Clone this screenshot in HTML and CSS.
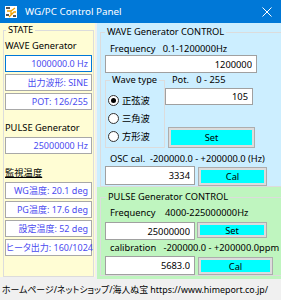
FILE: index.html
```html
<!DOCTYPE html>
<html lang="ja">
<head>
    <meta charset="UTF-8">
    <meta name="viewport" content="width=device-width, initial-scale=1.0">
    <title>WG/PC Control Panel</title>
    <link rel="stylesheet" href="styles.css">
</head>
<body>

<div class="window">
    <div class="titlebar">
        <svg class="app-icon" width="12" height="12" viewBox="0 0 12 12">
            <rect width="12" height="12" fill="#fff"/>
            <rect x="1" y="1" width="4" height="2" fill="#555"/>
            <rect x="1" y="8" width="3" height="2" fill="#555"/>
            <rect x="8" y="9" width="3" height="2" fill="#555"/>
            <path d="M2 5 L6 5 L6 9 M6 5 L10 2 M4 11 L9 6 L11 6" stroke="#f0a000" stroke-width="1.3" fill="none"/>
        </svg>
        <span class="title">WG/PC Control Panel</span>
        <svg class="close" width="10" height="10" viewBox="0 0 10 10">
            <path d="M0.5 0.5 L9.5 9.5 M9.5 0.5 L0.5 9.5" stroke="#fff" stroke-width="1"/>
        </svg>
    </div>

    <div class="main">
        <div class="state-pane">
            <fieldset class="group state">
                <legend>STATE</legend>
                <div class="caption">WAVE Generator</div>
                <div class="value active">1000000.0 Hz</div>
                <div class="value">出力波形: SINE</div>
                <div class="value">POT: 126/255</div>

                <div class="caption pulse-caption">PULSE Generator</div>
                <div class="value">25000000 Hz</div>

                <div class="caption temp-caption">監視温度</div>
                <div class="value">WG温度: 20.1 deg</div>
                <div class="value">PG温度: 17.6 deg</div>
                <div class="value">設定温度: 52 deg</div>
                <div class="value">ヒータ出力: 160/1024</div>
            </fieldset>
        </div>

        <div class="control-col">
            <div class="wave-pane">
                <fieldset class="group">
                    <legend>WAVE Generator CONTROL</legend>
                    <div class="label freq-label">Frequency&nbsp;&nbsp; 0.1-1200000Hz</div>
                    <input class="field freq-field" type="text" value="1200000">

                    <div class="wave-row">
                        <fieldset class="group wave-type">
                            <legend>Wave type</legend>
                            <label class="radio first"><span class="dot checked"></span>正弦波</label>
                            <label class="radio"><span class="dot"></span>三角波</label>
                            <label class="radio"><span class="dot"></span>方形波</label>
                        </fieldset>
                        <div class="pot">
                            <div class="label pot-label">Pot.&nbsp;&nbsp; 0 - 255</div>
                            <input class="field pot-field" type="text" value="105">
                            <button class="btn pot-set" type="button">Set</button>
                        </div>
                    </div>

                    <div class="label osc-label">OSC cal.&nbsp; -200000.0 - +200000.0 (Hz)</div>
                    <div class="row osc-row">
                        <input class="field short" type="text" value="3334">
                        <button class="btn osc-cal" type="button">Cal</button>
                    </div>
                </fieldset>
            </div>

            <div class="pulse-pane">
                <fieldset class="group">
                    <legend>PULSE Generator CONTROL</legend>
                    <div class="label pfreq-label">Frequency&nbsp;&nbsp;&nbsp; 4000-225000000Hz</div>
                    <div class="row pfreq-row">
                        <input class="field short" type="text" value="25000000">
                        <button class="btn pulse-set" type="button">Set</button>
                    </div>
                    <div class="label pcal-label">calibration&nbsp;&nbsp; -200000.0 - +200000.0ppm</div>
                    <div class="row pcal-row">
                        <input class="field short tall" type="text" value="5683.0">
                        <button class="btn pulse-cal" type="button">Cal</button>
                    </div>
                </fieldset>
            </div>
        </div>
    </div>

    <div class="footer">ホームページ/ネットショップ/海人ぬ宝 https://www.himeport.co.jp/</div>
</div>

</body>
</html>
```

FILE: styles.css
```css
* {
    box-sizing: border-box;
}
body {
    margin: 0;
    font-family: "Noto Sans", "Noto Sans CJK JP", sans-serif;
    font-size: 9.3px;
    font-feature-settings: "palt";
    color: #000;
    background-color: #f0f0f0;
}
.window {
    width: 281px;
    height: 300px;
    overflow: hidden;
}
.titlebar {
    height: 23px;
    background-color: #0078d7;
    color: white;
    display: flex;
    align-items: center;
    padding-left: 5px;
}
.app-icon {
    flex: none;
}
.title {
    margin-left: 8px;
    font-size: 9.8px;
    flex: 1;
}
.close {
    margin-right: 9px;
}
.main {
    display: flex;
    gap: 2px;
    height: 256px;
}

/* fieldset used as a groupbox */
.group {
    margin: 0;
    border: 1px solid #dcdcdc;
    min-width: 0;
}
.group legend {
    padding: 0 2px;
    line-height: 12px;
}

/* left: STATE */
.state-pane {
    width: 95px;
    margin-bottom: 2px;
    background-color: #fffdd4;
    padding: 1px 1px 0 3px;
}
.state {
    height: 100%;
    padding: 0 1px;
}
.state legend {
    margin-left: 1px;
}
.caption {
    line-height: 14px;
    margin-top: 3px;
    margin-bottom: 2px;
}
.pulse-caption {
    margin-top: 11px;
}
.temp-caption {
    margin-top: 12px;
    text-decoration: underline;
}
.value {
    height: 17px;
    line-height: 15px;
    margin-bottom: 2px;
    border: 1px solid #a8a8a8;
    background: white;
    color: #4b4bf0;
    font-size: 9px;
    text-align: right;
    padding-right: 3px;
    white-space: nowrap;
}
.value.active {
    border-color: #0078d7;
}

/* right column */
.control-col {
    flex: 1;
    display: flex;
    flex-direction: column;
}
.wave-pane {
    height: 164px;
    overflow: hidden;
    background-color: #cceeff;
    padding: 3px 0 0 3px;
}
.wave-pane > .group,
.pulse-pane > .group {
    padding: 0 0 0 4px;
    margin-right: -1px;
}
.pulse-pane {
    flex: 1;
    background-color: #bff5bf;
    padding: 4px 0 0 3px;
}
.pulse-pane legend {
    margin-left: 1px;
}
.label {
    line-height: 12px;
    padding-left: 5px;
    white-space: nowrap;
}
.freq-label {
    margin-top: 5px;
}
.field {
    display: block;
    margin: 0;
    height: 18px;
    border: 1px solid #a0a0a0;
    background: white;
    font: inherit;
    text-align: right;
    padding: 0 4px 0 0;
    color: #000;
}
.freq-field {
    width: 152px;
}
.wave-row {
    display: flex;
    margin-top: 1px;
}
.wave-type {
    width: 60px;
    padding: 0 0 2px 2px;
}
.wave-type legend {
    margin-left: 2px;
}
.radio {
    display: flex;
    align-items: center;
    height: 18px;
}
.radio.first {
    margin-top: 5px;
}
.dot {
    width: 11px;
    height: 11px;
    border: 1px solid #333;
    border-radius: 50%;
    background: white;
    margin-right: 3px;
    position: relative;
}
.dot.checked::after {
    content: "";
    position: absolute;
    left: 2px;
    top: 2px;
    width: 5px;
    height: 5px;
    border-radius: 50%;
    background: #000;
}
.pot {
    display: flex;
    flex-direction: column;
}
.pot-label {
    padding-left: 7px;
}
.pot-field {
    width: 88px;
    height: 17px;
    margin-top: 2px;
}
.btn {
    display: block;
    margin: 0;
    padding: 0;
    font: inherit;
    background-color: #00ffff;
    border: 1px solid #adadad;
    box-shadow: inset 0 0 0 2px #dcdcdc;
    color: #000;
}
.pot-set {
    width: 87px;
    height: 21px;
    margin: 22px 0 0 3px;
}
.osc-label {
    margin-top: 5px;
}
.row {
    display: flex;
    align-items: flex-start;
}
.osc-row {
    margin-top: 1px;
    gap: 3px;
}
.short {
    width: 90px;
    height: 19px;
}
.osc-cal {
    width: 69px;
    height: 19px;
    margin-top: 1px;
}
.pfreq-label {
    margin-top: 4px;
}
.pfreq-row {
    margin-top: 3px;
    gap: 2px;
}
.pfreq-row .short {
    height: 18px;
}
.pulse-set {
    width: 70px;
    height: 16px;
}
.pcal-label {
    margin-top: 2px;
}
.pcal-row {
    margin-top: 2px;
    gap: 3px;
}
.pulse-cal {
    width: 75px;
    height: 18px;
    margin-top: 1px;
}
.footer {
    padding: 3px 0 0 2px;
    font-size: 8.9px;
    line-height: 16px;
    white-space: nowrap;
}
```
